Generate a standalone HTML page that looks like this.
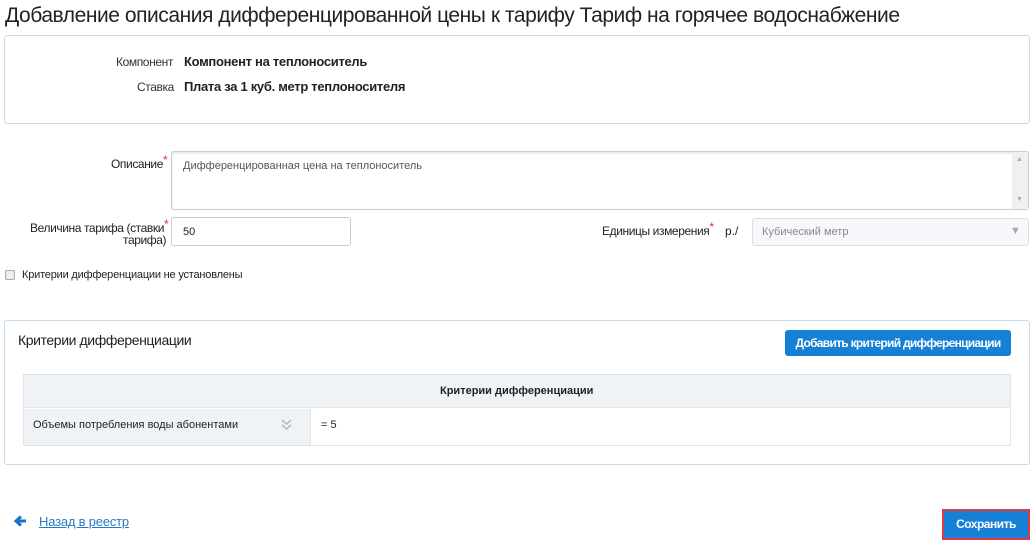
<!DOCTYPE html>
<html><head><meta charset="utf-8">
<style>
*{box-sizing:border-box;margin:0;padding:0}
body{width:1036px;height:543px;background:#fff;font-family:"Liberation Sans",sans-serif;color:#222;position:relative;overflow:hidden;font-size:12px}
.a{position:absolute;white-space:nowrap}
.box{position:absolute;border:1px solid #c8dcef;border-radius:3px;background:#fff}
.inp{position:absolute;border:1px solid #ccc;border-radius:3px;background:#fff}
.star{color:#d33;font-size:12px;position:relative;top:-4px}
.n{letter-spacing:-0.4px}
</style></head><body>
<div class="a" style="left:5px;top:4px;font-size:21px;color:#222;letter-spacing:-0.45px">Добавление описания дифференцированной цены к тарифу Тариф на горячее водоснабжение</div>
<div class="box" style="left:4px;top:35px;width:1026px;height:89px"></div>
<div class="a n" style="left:116px;top:55px;color:#333">Компонент</div>
<div class="a" style="left:184px;top:54px;font-size:13px;font-weight:bold;color:#222;letter-spacing:-0.3px">Компонент на теплоноситель</div>
<div class="a n" style="left:137px;top:80px;color:#333">Ставка</div>
<div class="a" style="left:184px;top:79px;font-size:13px;font-weight:bold;color:#222;letter-spacing:-0.3px">Плата за 1 куб. метр теплоносителя</div>

<div class="a n" style="left:111px;top:157px">Описание<span class="star">*</span></div>
<div class="inp" style="left:171px;top:151px;width:858px;height:59px;box-shadow:inset 0 1px 2px #ddd"></div>
<div style="position:absolute;left:1012px;top:152px;width:16px;height:57px;background:#f0f0f0"></div>
<div class="a" style="left:1016px;top:156px;font-size:7px;color:#aaa">▲</div>
<div class="a" style="left:1016px;top:196px;font-size:7px;color:#aaa">▼</div>
<div class="a" style="left:183px;top:160px;font-size:11px;color:#555">Дифференцированная цена на теплоноситель</div>

<div class="a n" style="left:30px;top:222px;line-height:12px">Величина тарифа (ставки<span class="star">*</span><br><span style="padding-left:93px">тарифа)</span></div>
<div class="inp" style="left:171px;top:217px;width:180px;height:29px"></div>
<div class="a" style="left:183px;top:226px;font-size:11px">50</div>

<div class="a n" style="left:602px;top:224px">Единицы измерения<span class="star">*</span></div>
<div class="a" style="left:725px;top:224px">р./</div>
<div class="inp" style="left:752px;top:218px;width:277px;height:28px;background:#f7f8fb;border-color:#ddd"></div>
<div class="a" style="left:762px;top:226px;font-size:11px;color:#888">Кубический метр</div>
<div class="a" style="left:1010px;top:225px;font-size:11px;color:#aaa">▼</div>

<div style="position:absolute;left:5px;top:270px;width:10px;height:10px;border:1px solid #aaa;border-radius:2px;background:#eee"></div>
<div class="a" style="left:22px;top:269px;font-size:11px;letter-spacing:-0.2px">Критерии дифференциации не установлены</div>

<div class="box" style="left:4px;top:320px;width:1026px;height:145px"></div>
<div class="a" style="left:18px;top:332px;font-size:14px;letter-spacing:-0.4px">Критерии дифференциации</div>
<div style="position:absolute;left:785px;top:330px;width:226px;height:26px;background:#1580d6;border-radius:3px;color:#fff;font-weight:bold;font-size:12px;text-align:center;line-height:26px;letter-spacing:-0.7px">Добавить критерий дифференциации</div>
<div style="position:absolute;left:23px;top:374px;width:988px;height:72px;border:1px solid #e0e4e8;background:#fff"></div>
<div style="position:absolute;left:24px;top:375px;width:986px;height:33px;background:#f0f3f6;border-bottom:1px solid #e0e4e8"></div>
<div class="a" style="left:440px;top:385px;font-weight:bold;font-size:11px">Критерии дифференциации</div>
<div style="position:absolute;left:24px;top:409px;width:287px;height:36px;background:#f0f3f6;border-right:1px solid #e0e4e8"></div>
<div class="a" style="left:33px;top:419px;font-size:11px">Объемы потребления воды абонентами</div>
<svg style="position:absolute;left:280px;top:418px" width="13" height="14"><path d="M2 2l4.5 4 4.5-4M2 7l4.5 4 4.5-4" fill="none" stroke="#bbb" stroke-width="1.6"/></svg>
<div class="a" style="left:321px;top:419px;font-size:11px">= 5</div>

<svg style="position:absolute;left:14px;top:515px" width="13" height="12"><path d="M12 6H4M7 1.5L2 6l5 4.5" fill="none" stroke="#1a73c9" stroke-width="3"/></svg>
<div class="a" style="left:39px;top:514px;font-size:13px;color:#2a7bc6;text-decoration:underline;letter-spacing:-0.2px">Назад в реестр</div>
<div style="position:absolute;left:942px;top:509px;width:88px;height:31px;border:2px solid #e03b3b;background:#1580d6;color:#fff;font-weight:bold;font-size:12px;text-align:center;line-height:27px;letter-spacing:-0.5px">Сохранить</div>
</body></html>
